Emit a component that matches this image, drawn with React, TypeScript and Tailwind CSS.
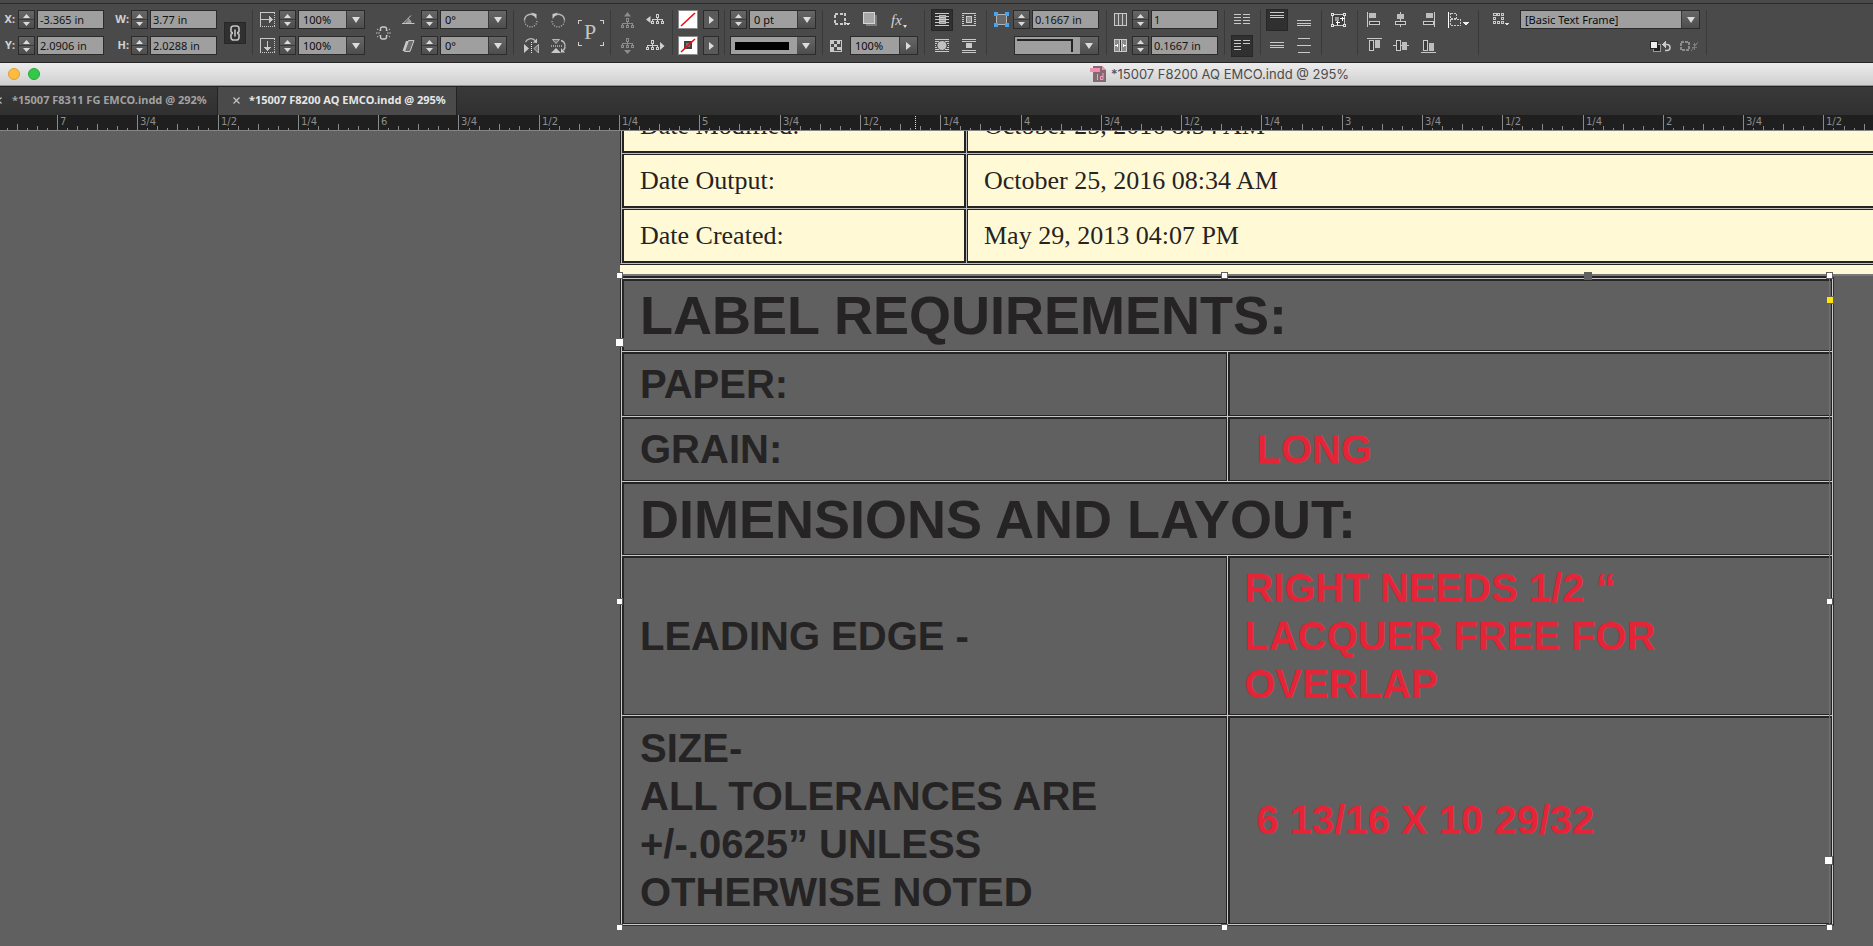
import React from "react";

type Kids = { children?: React.ReactNode };

/* ---------- building blocks ---------- */

function Icon({ w = 15, h = 15, children }: Kids & { w?: number; h?: number }) {
  return (
    <svg width={w} height={h} viewBox={`0 0 ${w} ${h}`} fill="none" stroke="#c9c9c9" shapeRendering="crispEdges" className="shrink-0" aria-hidden="true">
      {children}
    </svg>
  );
}

function Tool({ label, active, className = "", children }: Kids & { label: string; active?: boolean; className?: string }) {
  return (
    <button
      type="button"
      aria-label={label}
      title={label}
      className={`flex shrink-0 items-center justify-center ${active ? "h-[22px] w-[22px] border border-[#272727] bg-[#303030]" : ""} ${className}`}
    >
      {children}
    </button>
  );
}

function Triangle({ dir }: { dir: "up" | "down" | "right" | "bigDown" }) {
  const shape = { up: "M0 5 3.5 1 7 5z", down: "M0 0 3.5 4 7 0z", right: "M1 0 6 4 1 8z", bigDown: "M0 0 4 6 8 0z" }[dir];
  const w = dir === "bigDown" ? 8 : 7;
  const h = dir === "bigDown" ? 6 : dir === "right" ? 8 : 5;
  return (
    <svg width={w} height={h} viewBox={`0 0 ${w} ${h}`} fill="#dcdcdc" aria-hidden="true">
      <path d={shape} />
    </svg>
  );
}

function Spinner({ name, className = "" }: { name: string; className?: string }) {
  return (
    <span className={`flex h-[19px] w-[17px] shrink-0 flex-col border border-[#2b2b2b] bg-gradient-to-b from-[#676767] to-[#4d4d4d] ${className}`}>
      <button type="button" aria-label={`Increase ${name}`} className="flex flex-1 items-center justify-center border-b border-[#3a3a3a]">
        <Triangle dir="up" />
      </button>
      <button type="button" aria-label={`Decrease ${name}`} className="flex flex-1 items-center justify-center">
        <Triangle dir="down" />
      </button>
    </span>
  );
}

function Field({ name, value }: { name: string; value: string }) {
  return (
    <input
      id={name}
      aria-label={name}
      defaultValue={value}
      className="ml-[2px] h-[19px] w-[67px] shrink-0 border border-[#2b2b2b] bg-[#9f9f9f] px-[2px] text-[11px] leading-[16px] text-[#141414]"
    />
  );
}

function Combo({ name, value, dir = "bigDown", className = "ml-[2px] w-[67px]" }: { name: string; value: string; dir?: "bigDown" | "right"; className?: string }) {
  return (
    <span className={`flex h-[19px] shrink-0 border border-[#2b2b2b] bg-[#9f9f9f] ${className}`}>
      <select aria-label={name} className="min-w-0 flex-1 appearance-none bg-transparent pl-[4px] text-[11px] leading-[16px] text-[#0b0b0b]">
        <option>{value}</option>
      </select>
      <span className="flex w-[18px] items-center justify-center border-l border-[#383838] bg-gradient-to-b from-[#676767] to-[#4d4d4d]">
        <Triangle dir={dir} />
      </span>
    </span>
  );
}

function Group({ className, rows, side }: { className: string; rows: [React.ReactNode, React.ReactNode]; side?: React.ReactNode }) {
  return (
    <div className={`flex shrink-0 border-r border-[#3a3a3a] ${className}`}>
      <div className="flex flex-col gap-[7px]">
        <div className="flex h-[19px] items-center">{rows[0]}</div>
        <div className="flex h-[19px] items-center">{rows[1]}</div>
      </div>
      {side}
    </div>
  );
}

/* ---------- icons ---------- */

const ScaleX = () => (
  <Icon>
    <rect x="0.5" y="0.5" width="14" height="14" strokeDasharray="1 1" />
    <path d="M0 .5H15M1 7.5h11M.5 1v13" />
    <path d="M9 4l4 3.5L9 11z" fill="#c9c9c9" stroke="none" />
  </Icon>
);
const ScaleY = () => (
  <Icon>
    <rect x="0.5" y="0.5" width="14" height="14" strokeDasharray="1 1" />
    <path d="M0 .5H15M7.5 3v10M.5 1v13" />
    <path d="M4 9l3.5 4L11 9z" fill="#c9c9c9" stroke="none" />
  </Icon>
);
const ChainLink = () => (
  <svg width="10" height="16" viewBox="0 0 10 16" fill="none" stroke="#c4c4c4" strokeWidth="1.6" aria-hidden="true">
    <path d="M3 7.5H2.2A1.2 1.2 0 0 1 1 6V3.4A2.4 2.4 0 0 1 3.5 1h3A2.4 2.4 0 0 1 9 3.4V6a1.2 1.2 0 0 1-1.2 1.5H7M3 8.5h-.8A1.2 1.2 0 0 0 1 10v2.6A2.4 2.4 0 0 0 3.5 15h3A2.4 2.4 0 0 0 9 12.6V10a1.2 1.2 0 0 0-1.2-1.5H7M5 4.5v7" />
  </svg>
);
const BrokenLink = () => (
  <svg width="15" height="16" viewBox="0 0 15 16" fill="none" stroke="#c9c9c9" strokeWidth="1.4" aria-hidden="true">
    <path d="M4.500 6V4a2 2 0 0 1 2-2h2a2 2 0 0 1 2 2v2M4.500 10v2a2 2 0 0 0 2 2h2a2 2 0 0 0 2-2v-2" />
    <path strokeWidth="1" strokeDasharray="1.500 .8" d="M0 8h4M11 8h4M1 4l2.500 1.500M14 4l-2.500 1.500M1 12l2.500-1.500M14 12l-2.500-1.500" />
  </svg>
);
const Angle = () => (
  <svg width="13" height="11" viewBox="0 0 13 11" fill="none" stroke="#c4c4c4" aria-hidden="true">
    <path d="M1 9.500 9 1.500M0 9.500h12.500M6 4.500c2 1 3 3 3 5" />
    <path d="M3 9 7 5l2 4z" fill="#999" stroke="none" />
  </svg>
);
const Shear = () => (
  <svg width="13" height="12" viewBox="0 0 13 12" aria-hidden="true">
    <path d="M4 1h3L3.500 11h-3z" fill="#c9c9c9" />
    <path d="M6.500.5h5.500l-4 11H2.500z" fill="#6e6e6e" stroke="#c9c9c9" />
  </svg>
);
const Rotate = ({ flip }: { flip?: boolean }) => (
  <svg width="16" height="16" viewBox="0 0 16 16" fill="none" stroke="#b9b9b9" strokeWidth="1.4" aria-hidden="true">
    <g transform={flip ? "matrix(-1 0 0 1 16 0)" : undefined}>
      <path d="M1.500 8.500A6 6 0 0 1 11 3.500" />
      <path d="M1.700 9.500A6 6 0 0 0 14 8" strokeDasharray="1 1.400" />
      <path d="M9 0l5.500 1.500v5z" fill="#c9c9c9" stroke="none" transform="translate(-1 .5)" />
    </g>
  </svg>
);
const FlipH = () => (
  <svg width="17" height="17" viewBox="0 0 17 17" fill="none" stroke="#b9b9b9" aria-hidden="true">
    <path d="M2.500 5C4 1.500 9 .5 12 3.500" strokeWidth="1.300" />
    <path d="M10 5.500 14 6V1.500z" fill="#c9c9c9" stroke="none" />
    <path d="M8.500 5v12" strokeDasharray="1 1" stroke="#eee" />
    <path d="M1 7l5 4.500L1 16z" fill="#c9c9c9" stroke="none" />
    <path d="M15.500 7.500v8.500L11 11.500z" fill="#777" />
  </svg>
);
const FlipV = () => (
  <svg width="17" height="16" viewBox="0 0 17 16" fill="none" stroke="#b9b9b9" aria-hidden="true">
    <path d="M2.500 1.500h7L6 5.500z" fill="#777" />
    <path d="M1 8h11" strokeDasharray="1 1" stroke="#eee" />
    <path d="M1 15h10L6 10z" fill="#c9c9c9" stroke="none" />
    <path d="M11 2.500c4 1 5.500 6 2.500 10" strokeWidth="1.300" />
    <path d="M11 10v4.500h4z" fill="#c9c9c9" stroke="none" />
  </svg>
);
const Tree = ({ arrow, dim }: { arrow: "up" | "down" | "left" | "right"; dim?: boolean }) => {
  const wide = arrow === "left" || arrow === "right";
  const ox = arrow === "left" ? 5 : 0;
  const oy = arrow === "up" ? 6 : 0;
  const tri = { up: "M3 4.500h7L6.500 0z", down: "M3 12h7l-3.500 4z", left: "M4.500 2v7L0 5.500z", right: "M14 2v8l4.500-4z" }[arrow];
  return (
    <svg width={wide ? 19 : 13} height={wide ? 11 : 16} viewBox={wide ? "0 0 19 11" : "0 0 13 16"} fill="none" stroke={dim ? "#8c8c8c" : "#d0d0d0"} shapeRendering="crispEdges" aria-hidden="true">
      <path transform={`translate(${ox} ${oy})`} d="M5.500.5h2v3h-2zM6.500 4v3M1.500 7V5.500h10V7M.5 7.500h2v2h-2zM5.500 7.500h2v2h-2zM10.500 7.500h2v2h-2z" />
      <path d={tri} fill={dim ? "#8c8c8c" : "#d0d0d0"} stroke="none" shapeRendering="auto" />
    </svg>
  );
};
const Swatch = ({ stroke }: { stroke?: boolean }) => (
  <svg width="20" height="19" viewBox="0 0 20 19" aria-hidden="true">
    <rect width="20" height="19" fill="#8a8a8a" />
    <rect x="1" y="1" width="18" height="17" fill="#fff" />
    {stroke && <rect x="7" y="6" width="6" height="6" fill="#777" stroke="#444" strokeWidth="2" />}
    <path d="M3 16 17 3" stroke="#f00c0c" strokeWidth="1.600" />
  </svg>
);
const DashedSquare = () => (
  <Icon w={16} h={13}>
    <rect x="1" y="1" width="10" height="10" strokeDasharray="3 1.500" strokeWidth="2" />
    <path d="M12 10h4l-2 3z" fill="#ddd" stroke="none" />
  </Icon>
);
const Shadow = () => (
  <Icon>
    <rect x="3" y="3" width="11" height="11" fill="#7b7b7b" stroke="none" />
    <rect x="0.5" y="0.5" width="11" height="11" fill="#a8a8a8" stroke="#d5d5d5" />
  </Icon>
);
const Checker = () => (
  <Icon w={12} h={12}>
    <rect x="0.5" y="0.5" width="11" height="11" />
    <path d="M1 1h3v3H1zM7 1h3v3H7zM4 4h3v3H4zM1 7h3v4H1zM7 7h4v3H7z" fill="#c9c9c9" stroke="none" />
  </Icon>
);
const WrapNone = () => (
  <Icon w={14} h={13}>
    <path d="M0 .5h14M0 3.500h14M0 6.500h14M0 9.500h14M0 12.500h14" />
    <path d="M4 2.500h6v8H4z" fill="#999" stroke="#bbb" />
    <path d="M0 6.500h14M4 4.500h6M4 8.500h6" />
  </Icon>
);
const WrapBox = () => (
  <Icon w={14} h={13}>
    <path d="M0 .5h14M0 12.500h14M0 2.500h2M12 2.500h2M0 4.500h2M12 4.500h2M0 6.500h2M12 6.500h2M0 8.500h2M12 8.500h2M0 10.500h2M12 10.500h2" />
    <rect x="4.500" y="3.500" width="5" height="6" fill="#8b8b8b" />
  </Icon>
);
const WrapShape = () => (
  <Icon w={14} h={13}>
    <path d="M0 .5h14M0 12.500h14M0 2.500h4M10 2.500h4M0 4.500h2M12 4.500h2M0 6.500h1M13 6.500h1M0 8.500h2M12 8.500h2M0 10.500h4M10 10.500h4" />
    <circle cx="7" cy="6.500" r="4.500" fill="#c0c0c0" stroke="none" shapeRendering="auto" />
  </Icon>
);
const WrapJump = () => (
  <Icon w={14} h={14}>
    <path d="M0 .5h14M0 2.500h14M0 11.500h14M0 13.500h14" />
    <rect x="4" y="4" width="6" height="5" fill="#c9c9c9" stroke="none" />
  </Icon>
);
const Corner = () => (
  <Icon>
    <rect x="2.500" y="2.500" width="10" height="10" fill="#6a6a6a" stroke="#b5b5b5" />
    <path d="M0 0h4v4H0zM11 0h4v4h-4zM0 11h4v4H0zM11 11h4v4h-4z" fill="#45a5f5" stroke="none" />
  </Icon>
);
const Columns = () => (
  <Icon w={13} h={13}>
    <path d="M.5.5h12v12H.5zM4.500 0v13M8.500 0v13" fill="#5c5c5c" />
  </Icon>
);
const Gutter = () => (
  <Icon w={13} h={13}>
    <path d="M.5.5h12v12H.5z" fill="#8a8a8a" />
    <path d="M6.500 1v11" stroke="#333" />
    <path d="M5.500 0v13M7.500 0v13" />
    <path d="M1 6.500h3M9 6.500h3M3.500 5v3M9.500 5v3" stroke="#fff" />
  </Icon>
);
const TwoCols = ({ uneven }: { uneven?: boolean }) => (
  <Icon w={16} h={11}>
    <path d="M0 .5h7M0 3.500h7M0 6.500h7M0 9.500h7M9 .5h7M9 3.500h7" />
    {!uneven && <path d="M9 6.500h7M9 9.500h7" />}
  </Icon>
);
const Lines = ({ at }: { at: "top" | "bottom" | "middle" | "spread" }) => (
  <Icon w={14} h={15}>
    <path
      d={{ top: "M0 .5h14M0 3.500h14M0 5.500h14", bottom: "M0 8.500h14M0 11.500h14M0 13.500h14", middle: "M0 4.500h14M0 7.500h14M0 9.500h14", spread: "M1 .5h12M0 7.500h14M1 14.500h12" }[at]}
    />
  </Icon>
);
const Fit = () => (
  <Icon w={16} h={14}>
    <rect x="1.500" y="1.500" width="12" height="11" fill="#3e3e3e" />
    <path d="M4 4h4v4H4z" fill="#999" stroke="none" />
    <path d="M.5.5h2v2h-2zM12.500.5h2v2h-2zM.5 11.500h2v2h-2zM12.500 11.500h2v2h-2z" fill="#4a4a4a" stroke="#e0e0e0" />
    <path d="M11.500 4v4M9 5.500h5M6.500 8v4M5 9.500h4" stroke="#fff" />
  </Icon>
);
const Align = ({ kind }: { kind: "l" | "c" | "r" | "t" | "m" | "b" }) => {
  const horizontal = kind === "l" || kind === "c" || kind === "r";
  const line = { l: "M.5 0v15", c: "M7.500 0v15", r: "M13.500 0v15", t: "M0 .5h15", m: "M0 7.500h16", b: "M0 14.500h15" }[kind];
  const a = { l: [2, 1], c: [4, 2], r: [5, 1], t: [8, 2], m: [9, 4], b: [8, 5] }[kind];
  const b = { l: [2, 9], c: [2, 9], r: [2, 9], t: [2, 2], m: [3, 2], b: [2, 2] }[kind];
  return (
    <Icon w={16} h={15}>
      <path d={line} />
      <rect x={a[0]} y={a[1]} width={horizontal ? 7 : 5} height={horizontal ? 5 : 8} fill="#bdbdbd" stroke="none" />
      <rect x={b[0] + 0.5} y={b[1] + 0.5} width={horizontal ? 10 : 4} height={horizontal ? 3 : 10} fill="#3c3c3c" />
    </Icon>
  );
};
const AlignTo = () => (
  <Icon w={21} h={16}>
    <path d="M.5 0v16" stroke="#fff" />
    <path d="M2.500 1.500h6v5h-6zM2.500 7.500h10v6h-10z" strokeDasharray="2 1" />
    <path d="M15 10h6l-3 4z" fill="#eee" stroke="none" />
  </Icon>
);
const StyleFrame = () => (
  <Icon w={16} h={13}>
    <path d="M0 .5h3v2H.5zM4.500.5h2v2h-2zM8.500.5h2v2h-2zM.5 4.500h2v2h-2zM8.500 4.500h2v2h-2zM.5 8.500h2v2h-2zM4.500 8.500h2v2h-2zM8.500 8.500h2v2h-2z" />
    <path d="M12 10h4l-2 3z" fill="#ddd" stroke="none" />
  </Icon>
);
const ClearStyle = () => (
  <Icon w={22} h={12}>
    <rect x="4.500" y="4.500" width="7" height="7" fill="#222" stroke="#999" />
    <rect x="1" y="1" width="7" height="7" fill="#eee" stroke="#222" strokeWidth="1" />
    <path d="M15 4.500h3a3 3 0 0 1 0 6h-2" strokeWidth="1.500" shapeRendering="auto" />
    <path d="M13 4.500 16.500 1v7z" fill="#c9c9c9" stroke="none" />
  </Icon>
);
const Redefine = () => (
  <Icon w={19} h={12}>
    <rect x="1" y="2" width="8" height="8" strokeDasharray="3 1" strokeWidth="2" stroke="#8c8c8c" />
    <path d="M11 11l7-9M13 4.500h4M12 7.500h5M14.500 3v7" stroke="#7c7c7c" shapeRendering="auto" />
  </Icon>
);

/* ---------- control bar ---------- */

function ControlBar() {
  const label = "text-right text-[11px] font-bold text-[#d2d2d2]";
  return (
    <div className="border-b border-[#262626] bg-[#4a4a4a]">
      <div className="h-[3px]" />
      <div className="flex overflow-hidden border-t border-[#2a2a2a] pt-[6px] pb-[7px]">
        <Group
          className="w-[253px]"
          rows={[
            <>
              <label htmlFor="X position" className={`w-[15px] ${label}`}>X:</label>
              <Spinner name="X" className="ml-[3px]" />
              <Field name="X position" value="-3.365 in" />
              <label htmlFor="Width" className={`w-[25px] ${label}`}>W:</label>
              <Spinner name="width" className="ml-[2px]" />
              <Field name="Width" value="3.77 in" />
            </>,
            <>
              <label htmlFor="Y position" className={`w-[15px] ${label}`}>Y:</label>
              <Spinner name="Y" className="ml-[3px]" />
              <Field name="Y position" value="2.0906 in" />
              <label htmlFor="Height" className={`w-[25px] ${label}`}>H:</label>
              <Spinner name="height" className="ml-[2px]" />
              <Field name="Height" value="2.0288 in" />
            </>,
          ]}
          side={
            <Tool label="Constrain proportions" active className="ml-[7px] self-center">
              <ChainLink />
            </Tool>
          }
        />
        <div className="flex w-[261px] shrink-0 border-r border-[#3a3a3a] pl-[7px]">
          <div className="flex flex-col gap-[7px]">
            <div className="flex h-[19px] items-center">
              <ScaleX />
              <Spinner name="scale X" className="ml-[4px]" />
              <Combo name="Scale X" value="100%" />
            </div>
            <div className="flex h-[19px] items-center">
              <ScaleY />
              <Spinner name="scale Y" className="ml-[4px]" />
              <Combo name="Scale Y" value="100%" />
            </div>
          </div>
          <Tool label="Constrain scaling" className="mx-[11px]">
            <BrokenLink />
          </Tool>
          <div className="flex flex-col gap-[7px]">
            <div className="flex h-[19px] items-center">
              <Angle />
              <Spinner name="rotation" className="ml-[6px]" />
              <Combo name="Rotation angle" value="0°" />
            </div>
            <div className="flex h-[19px] items-center">
              <Shear />
              <Spinner name="shear" className="ml-[6px]" />
              <Combo name="Shear angle" value="0°" />
            </div>
          </div>
        </div>
        <Group
          className="w-[97px] pl-[9px]"
          rows={[
            <>
              <Tool label="Rotate clockwise"><Rotate /></Tool>
              <Tool label="Rotate counter-clockwise" className="ml-[11px]"><Rotate flip /></Tool>
            </>,
            <>
              <Tool label="Flip horizontal"><FlipH /></Tool>
              <Tool label="Flip vertical" className="ml-[10px]"><FlipV /></Tool>
            </>,
          ]}
          side={
            <div className="ml-[11px] self-center">
              <svg width="26" height="26" viewBox="0 0 26 26" fill="none" stroke="#d0d0d0" shapeRendering="crispEdges" aria-hidden="true">
                <path d="M.5 4V.5H4M22 .5h3.500V4M.5 22v3.500H4M22 25.500h3.500V22" />
                <text x="12" y="19" textAnchor="middle" fill="#c4c4c4" stroke="none" className="font-['Liberation_Serif',serif] text-[22px]">P</text>
              </svg>
            </div>
          }
        />
        <Group
          className="w-[62px] pl-[10px]"
          rows={[
            <>
              <Tool label="Select container"><Tree arrow="up" dim /></Tool>
              <Tool label="Select previous" className="ml-[12px]"><Tree arrow="left" /></Tool>
            </>,
            <>
              <Tool label="Select content"><Tree arrow="down" dim /></Tool>
              <Tool label="Select next" className="ml-[12px]"><Tree arrow="right" /></Tool>
            </>,
          ]}
        />
        <Group
          className="w-[52px] pl-[5px]"
          rows={[
            <>
              <Tool label="Fill"><Swatch /></Tool>
              <Tool label="Fill options" className="ml-[5px] h-[19px] w-[16px] border border-[#2b2b2b] bg-[#5a5a5a]"><Triangle dir="right" /></Tool>
            </>,
            <>
              <Tool label="Stroke"><Swatch stroke /></Tool>
              <Tool label="Stroke options" className="ml-[5px] h-[19px] w-[16px] border border-[#2b2b2b] bg-[#5a5a5a]"><Triangle dir="right" /></Tool>
            </>,
          ]}
        />
        <Group
          className="w-[98px] pl-[5px]"
          rows={[
            <>
              <Spinner name="stroke weight" />
              <Combo name="Stroke weight" value="0 pt" />
            </>,
            <button type="button" aria-label="Stroke type" className="flex h-[19px] w-[86px] border border-[#2b2b2b] bg-[#9f9f9f]">
              <span className="ml-[4px] h-[8px] flex-1 self-center bg-black" />
              <span className="ml-[8px] flex w-[18px] items-center justify-center self-stretch bg-gradient-to-b from-[#676767] to-[#4d4d4d]"><Triangle dir="bigDown" /></span>
            </button>,
          ]}
        />
        <Group
          className="w-[102px] pl-[7px]"
          rows={[
            <>
              <Tool label="Object effects target" className="ml-[4px]"><DashedSquare /></Tool>
              <Tool label="Drop shadow" className="ml-[13px]"><Shadow /></Tool>
              <Tool label="Effects" className="ml-[13px] gap-px">
                <span className="font-['Liberation_Serif',serif] text-[15px] leading-[16px] text-[#d2d2d2] italic">fx</span>
                <svg width="4" height="3" viewBox="0 0 4 3" fill="#ddd" className="self-end" aria-hidden="true"><path d="M0 0h4L2 3z" /></svg>
              </Tool>
            </>,
            <>
              <Checker />
              <Combo name="Opacity" value="100%" dir="right" className="ml-[8px] w-[68px]" />
            </>,
          ]}
        />
        <Group
          className="w-[62px] pl-[6px]"
          rows={[
            <>
              <Tool label="No text wrap" active><WrapNone /></Tool>
              <Tool label="Wrap around bounding box" className="ml-[9px]"><WrapBox /></Tool>
            </>,
            <>
              <Tool label="Wrap around object shape" className="ml-[4px]"><WrapShape /></Tool>
              <Tool label="Jump object" className="ml-[13px]"><WrapJump /></Tool>
            </>,
          ]}
        />
        <Group
          className="w-[120px] pl-[7px]"
          rows={[
            <>
              <Corner />
              <Spinner name="corner size" className="ml-[4px]" />
              <Field name="Corner size" value="0.1667 in" />
            </>,
            <button type="button" aria-label="Corner shape" className="ml-[20px] flex h-[19px] w-[85px] border border-[#2b2b2b] bg-[#9f9f9f]">
              <span className="mt-[2px] ml-[2px] h-[13px] flex-1 border-t-2 border-r-2 border-[#242424]" />
              <span className="ml-[7px] flex w-[18px] items-center justify-center self-stretch bg-gradient-to-b from-[#676767] to-[#4d4d4d]"><Triangle dir="bigDown" /></span>
            </button>,
          ]}
        />
        <Group
          className="w-[118px] pl-[7px]"
          rows={[
            <>
              <Columns />
              <Spinner name="columns" className="ml-[5px]" />
              <Field name="Columns" value="1" />
            </>,
            <>
              <Gutter />
              <Spinner name="gutter" className="ml-[5px]" />
              <Field name="Gutter" value="0.1667 in" />
            </>,
          ]}
        />
        <Group
          className="w-[36px] pl-[6px]"
          rows={[
            <Tool label="Balance columns" className="ml-[3px]"><TwoCols /></Tool>,
            <Tool label="Unbalanced columns" active><TwoCols uneven /></Tool>,
          ]}
        />
        <Group
          className="w-[61px] pl-[5px]"
          rows={[
            <>
              <Tool label="Align top" active><Lines at="top" /></Tool>
              <Tool label="Align bottom" className="ml-[9px]"><Lines at="bottom" /></Tool>
            </>,
            <>
              <Tool label="Align center" className="ml-[4px]"><Lines at="middle" /></Tool>
              <Tool label="Justify vertically" className="ml-[13px]"><Lines at="spread" /></Tool>
            </>,
          ]}
        />
        <Group className="w-[36px] pl-[9px]" rows={[<Tool label="Auto-fit"><Fit /></Tool>, null]} />
        <Group
          className="w-[121px] pl-[9px]"
          rows={[
            <>
              <Tool label="Align left edges"><Align kind="l" /></Tool>
              <Tool label="Align horizontal centers" className="ml-[10px]"><Align kind="c" /></Tool>
              <Tool label="Align right edges" className="ml-[12px]"><Align kind="r" /></Tool>
              <Tool label="Align to" className="ml-[11px]"><AlignTo /></Tool>
            </>,
            <>
              <Tool label="Align top edges"><Align kind="t" /></Tool>
              <Tool label="Align vertical centers" className="ml-[10px]"><Align kind="m" /></Tool>
              <Tool label="Align bottom edges" className="ml-[12px]"><Align kind="b" /></Tool>
            </>,
          ]}
        />
        <Group
          className="w-[228px] pl-[14px]"
          rows={[
            <>
              <Tool label="Object style options"><StyleFrame /></Tool>
              <Combo name="Object style" value="[Basic Text Frame]" className="ml-[11px] w-[180px]" />
            </>,
            <>
              <Tool label="Clear overrides" className="ml-[156px]"><ClearStyle /></Tool>
              <Tool label="Redefine style" className="ml-[9px]"><Redefine /></Tool>
            </>,
          ]}
        />
      </div>
    </div>
  );
}

/* ---------- window chrome ---------- */

function TitleBar() {
  return (
    <header className="flex h-[23px] items-center border-b border-[#8f9292] bg-gradient-to-b from-[#ededed] to-[#cfcfcf]">
      <button type="button" aria-label="Minimize" className="ml-[8px] h-[12px] w-[12px] shrink-0 rounded-full border border-[#de9f34] bg-[#fdbc40]" />
      <button type="button" aria-label="Zoom" className="ml-[8px] h-[12px] w-[12px] shrink-0 rounded-full border border-[#2aa83a] bg-[#34c84a]" />
      <h1 className="ml-[1050px] flex items-center gap-[5px] font-['Inter',sans-serif] text-[13px] leading-[20px] whitespace-nowrap text-[#4c4c4c]">
        <svg width="16" height="16" viewBox="0 0 16 16" aria-hidden="true">
          <path d="M3 0h9l4 4v12H3z" fill="#84696f" />
          <path d="M12 0l4 4h-4z" fill="#ef8fb8" />
          <path d="M0 2h10v4H0z" fill="#ef8fb8" />
          <path d="M7.500 8v6M13 7v6.500h-2.500v-3H13" fill="none" stroke="#f5a0c4" />
        </svg>
        *15007 F8200 AQ EMCO.indd @ 295%
      </h1>
    </header>
  );
}

function CloseX() {
  return (
    <svg width="7" height="7" viewBox="0 0 7 7" stroke="#c4c4c4" strokeWidth="1.200" aria-hidden="true">
      <path d="M.5.5l6 6M6.500.5l-6 6" />
    </svg>
  );
}

function Tabs() {
  return (
    <nav className="flex h-[29px] border-t border-[#232323] bg-gradient-to-b from-[#393939] to-[#303030] text-[11px] font-bold whitespace-nowrap">
      <div className="flex w-[218px] items-center overflow-hidden border-r border-[#222] pb-[2px]">
        <button type="button" aria-label="Close tab" className="-ml-[5px]"><CloseX /></button>
        <a href="#f8311" className="ml-[10px] text-[#a2a2a2]">*15007 F8311 FG EMCO.indd @ 292%</a>
      </div>
      <div className="flex w-[239px] items-center border-r border-[#222] bg-[#4a4a4a] pb-[2px]">
        <button type="button" aria-label="Close tab" className="ml-[15px]"><CloseX /></button>
        <a href="#f8200" aria-current="page" className="ml-[9px] text-[#e6e6e6]">*15007 F8200 AQ EMCO.indd @ 295%</a>
      </div>
    </nav>
  );
}

function Ruler() {
  const labels = ["", "7", "3/4", "1/2", "1/4", "6", "3/4", "1/2", "1/4", "5", "3/4", "1/2", "1/4", "4", "3/4", "1/2", "1/4", "3", "3/4", "1/2", "1/4", "2", "3/4", "1/2"];
  const quarter = 241 / 3 - 0.04;
  const start = 57 - quarter;
  const ticks = Array.from({ length: labels.length * 8 }, (_, i) => ({
    x: Math.round(start + (i * quarter) / 8),
    h: i % 8 === 0 ? 15 : i % 4 === 0 ? 6 : i % 2 === 0 ? 4 : 2,
  }));
  return (
    <div className="h-[16px] border-b border-[#858585] bg-[#1f1f1f]">
      <svg width="100%" height="15" className="block" aria-label="Horizontal ruler" role="img">
        {ticks.map((t, i) => (
          <rect key={i} x={t.x} y={15 - t.h} width="1" height={t.h} fill="#8a8a8a" />
        ))}
        {labels.map((l, i) => (
          <text key={i} x={Math.round(start + i * quarter) + 3} y="10" fill="#8d8d8d" className="font-['DejaVu_Sans',sans-serif] text-[10px]">
            {l}
          </text>
        ))}
        <path d="M915.500 1v14" stroke="#e0e0e0" strokeDasharray="1 1" />
      </svg>
    </div>
  );
}

/* ---------- document ---------- */

const creamCell = "h-[55px] border-t border-l border-[#bdbdbd] py-0 text-left font-normal";
const creamKey = "shadow-[inset_2px_1px_0_#242424,inset_-2px_-2px_0_#242424]";
const creamValue = "shadow-[inset_1px_1px_0_#242424,inset_0_-2px_0_#242424]";
const grayCell = "border-t border-l border-[#c8c8c8] py-0 text-left align-middle shadow-[inset_2px_2px_0_#262425,inset_-1px_-1px_0_#262425]";

function DatesTable() {
  const rows = [
    ["Date Modified:", "October 25, 2016 8:34 AM"],
    ["Date Output:", "October 25, 2016 08:34 AM"],
    ["Date Created:", "May 29, 2013 04:07 PM"],
  ];
  return (
    <div className="border-b-2 border-[#787878] bg-[#fffad5] pb-[9px]">
      <div className="-mt-[33px] border-b border-[#242424]">
        <table className="w-full table-fixed border-separate border-spacing-0 border-b border-l border-b-[#bdbdbd] border-l-[#242424] font-['Liberation_Serif',serif] text-[26px] leading-[32px] text-[#252324]">
          <colgroup>
            <col className="w-[345px]" />
            <col />
          </colgroup>
          <tbody>
            {rows.map(([k, v]) => (
              <tr key={k}>
                <th scope="row" className={`${creamCell} ${creamKey} pl-[18px]`}>{k}</th>
                <td className={`${creamCell} ${creamValue} pl-[17px]`}>{v}</td>
              </tr>
            ))}
          </tbody>
        </table>
      </div>
    </div>
  );
}

function Handle({ at, big }: { at: string; big?: boolean }) {
  return <span className={`absolute border border-[#606060] bg-white ${big ? "h-[9px] w-[9px]" : "h-[7px] w-[7px]"} ${at}`} />;
}

function RequirementsTable() {
  const pad = "pl-[18px]";
  return (
    <div className="relative mr-[40px] border-t-2 border-l border-[#262425] shadow-[1px_1px_0_#303030]">
      <table className="w-full table-fixed border-separate border-spacing-0 border-r border-b border-[#c8c8c8] font-['Liberation_Sans',sans-serif] text-[40px] leading-[48px] font-bold text-[#252324]">
        <tbody>
          <tr>
            <th colSpan={2} className={`h-[73px] text-[54px] ${grayCell} ${pad}`}>LABEL REQUIREMENTS:</th>
          </tr>
          <tr>
            <th scope="row" className={`h-[65px] ${grayCell} ${pad}`}>PAPER:</th>
            <td className={grayCell} />
          </tr>
          <tr>
            <th scope="row" className={`h-[65px] ${grayCell} ${pad}`}>GRAIN:</th>
            <td className={`pl-[29px] text-[#e62437] ${grayCell}`}>LONG</td>
          </tr>
          <tr>
            <th colSpan={2} className={`h-[74px] text-[54px] ${grayCell} ${pad}`}>DIMENSIONS AND LAYOUT:</th>
          </tr>
          <tr>
            <th scope="row" className={`h-[160px] ${grayCell} ${pad}`}>LEADING EDGE -</th>
            <td className={`pl-[17px] text-[#e62437] ${grayCell}`}>
              RIGHT NEEDS 1/2 “<br />LACQUER FREE FOR<br />OVERLAP
            </td>
          </tr>
          <tr>
            <th scope="row" className={`h-[209px] ${grayCell} ${pad}`}>
              SIZE-<br />ALL TOLERANCES ARE<br />+/-.0625” UNLESS<br />OTHERWISE NOTED
            </th>
            <td className={`pl-[29px] text-[#e62437] ${grayCell}`}>6 13/16 X 10 29/32</td>
          </tr>
        </tbody>
      </table>
      <span className="absolute top-0 right-[3px] bottom-0 w-px bg-[#707070]" />
      <Handle at="-top-[6px] -left-[5px]" />
      <Handle at="-top-[6px] left-1/2 -ml-[6px]" />
      <Handle at="-top-[6px] right-0" />
      <Handle at="top-[320px] -left-[5px]" />
      <Handle at="top-[320px] right-0" />
      <Handle at="-bottom-[6px] -left-[5px]" />
      <Handle at="-bottom-[6px] left-1/2 -ml-[6px]" />
      <Handle at="-bottom-[6px] right-0" />
      <Handle big at="top-[60px] -left-[6px]" />
      <Handle big at="bottom-[60px] right-0" />
      <span className="absolute -top-[6px] right-[241px] h-[8px] w-[8px] bg-[#606060]" />
      <span className="absolute top-[18px] -right-px h-[8px] w-[8px] border border-[#606060] bg-[#ffe600]" />
    </div>
  );
}

export default function App() {
  return (
    <div className="flex min-h-screen flex-col bg-[#606060] font-['Noto_Sans',sans-serif]">
      <ControlBar />
      <TitleBar />
      <Tabs />
      <Ruler />
      <main className="flex flex-1 overflow-hidden">
        <div className="w-[620px] shrink-0" />
        <div className="min-w-0 flex-1 pb-[20px]">
          <DatesTable />
          <RequirementsTable />
        </div>
      </main>
    </div>
  );
}
